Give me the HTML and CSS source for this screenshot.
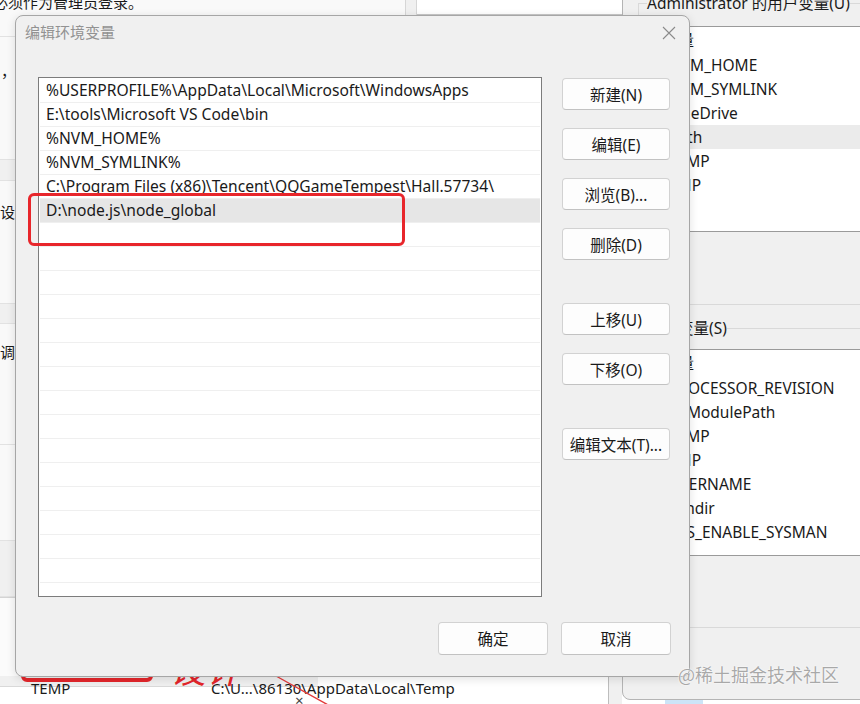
FILE: index.html
```html
<!DOCTYPE html>
<html>
<head>
    <title>编辑环境变量</title>
    <link rel="stylesheet" href="styles.css">
</head>
<body>
    <div class="desktop">
        <!-- window behind, on the left -->
        <div class="back-win">
            <div class="back-top">
                <div class="back-note">必须作为管理员登录。</div>
                <div class="back-gap"></div>
                <div class="back-box"></div>
            </div>
            <div class="band band-a"></div>
            <div class="band band-b"><span class="tail-char comma">，</span></div>
            <div class="band band-grey band-c"></div>
            <div class="band band-d"><span class="tail-char">设</span></div>
            <div class="band band-grey band-e"></div>
            <div class="band band-f"><span class="tail-char">调</span></div>
            <div class="band band-g"></div>
            <div class="band band-grey band-h"></div>
            <div class="band band-white band-i"></div>
            <div class="back-tail">
                <div class="tail-row">
                    <span class="tail-name">TEMP</span>
                    <span class="tail-value">C:\U...\86130\AppData\Local\Temp</span>
                </div>
                <div class="tail-row">
                    <span class="tail-name">TMP</span>
                    <span class="tail-value">C:\U...\86130\AppData\Local\Temp</span>
                </div>
            </div>
        </div>

        <div class="under-strip"><div class="under-cell"></div></div>

        <!-- environment variables window, right -->
        <div class="env-win">
            <fieldset class="group group-user">
                <legend>Administrator 的用户变量(U)</legend>
                <div class="var-list">
                    <div class="var-head">变量</div>
                    <div class="var-row">NVM_HOME</div>
                    <div class="var-row">NVM_SYMLINK</div>
                    <div class="var-row">OneDrive</div>
                    <div class="var-row selected">Path</div>
                    <div class="var-row">TEMP</div>
                    <div class="var-row">TMP</div>
                </div>
            </fieldset>
            <fieldset class="group group-sys">
                <legend>系统变量(S)</legend>
                <div class="var-list">
                    <div class="var-head">变量</div>
                    <div class="var-row">PROCESSOR_REVISION</div>
                    <div class="var-row">PSModulePath</div>
                    <div class="var-row">TEMP</div>
                    <div class="var-row">TMP</div>
                    <div class="var-row">USERNAME</div>
                    <div class="var-row">windir</div>
                    <div class="var-row">ZES_ENABLE_SYSMAN</div>
                </div>
            </fieldset>
        </div>

        <!-- old annotations under the dialog -->
        <div class="mark-box-old"></div>
        <span class="mark-scrawl">设计</span>
        <span class="small-x">×</span>
        <svg class="mark-line" width="860" height="704" viewBox="0 0 860 704">
            <line x1="276" y1="676" x2="330" y2="706" stroke="#e23a3a" stroke-width="1.4"/>
        </svg>

        <!-- the dialog -->
        <div class="dialog">
            <div class="titlebar">
                <span class="title">编辑环境变量</span>
                <svg class="close" width="14" height="14" viewBox="0 0 14 14">
                    <path d="M1 1 L13 13 M13 1 L1 13" stroke="#8a8a8a" stroke-width="1.1" fill="none"/>
                </svg>
            </div>
            <div class="dialog-body">
                <div class="path-list">
                    <div class="path-row">%USERPROFILE%\AppData\Local\Microsoft\WindowsApps</div>
                    <div class="path-row">E:\tools\Microsoft VS Code\bin</div>
                    <div class="path-row">%NVM_HOME%</div>
                    <div class="path-row">%NVM_SYMLINK%</div>
                    <div class="path-row">C:\Program Files (x86)\Tencent\QQGameTempest\Hall.57734\</div>
                    <div class="path-row selected">D:\node.js\node_global</div>
                    <div class="path-row"></div>
                    <div class="path-row"></div>
                    <div class="path-row"></div>
                    <div class="path-row"></div>
                    <div class="path-row"></div>
                    <div class="path-row"></div>
                    <div class="path-row"></div>
                    <div class="path-row"></div>
                    <div class="path-row"></div>
                    <div class="path-row"></div>
                    <div class="path-row"></div>
                    <div class="path-row"></div>
                    <div class="path-row"></div>
                    <div class="path-row"></div>
                    <div class="path-row"></div>
                    <div class="path-row"></div>
                </div>
                <div class="side-buttons">
                    <button class="btn">新建(N)</button>
                    <button class="btn">编辑(E)</button>
                    <button class="btn">浏览(B)...</button>
                    <button class="btn">删除(D)</button>
                    <button class="btn btn-sep">上移(U)</button>
                    <button class="btn">下移(O)</button>
                    <button class="btn btn-sep">编辑文本(T)...</button>
                </div>
            </div>
            <div class="dialog-foot">
                <button class="btn btn-wide">确定</button>
                <button class="btn btn-wide">取消</button>
            </div>
        </div>

        <div class="red-box"></div>
        <div class="watermark">@稀土掘金技术社区</div>
    </div>
</body>
</html>
```

FILE: styles.css
```css
body {
    margin: 0;
    background-color: #ffffff;
    font-family: "Noto Sans", "Noto Sans CJK SC", sans-serif;
    font-size: 15.5px;
    color: #1a1a1a;
}

.desktop {
    position: relative;
    width: 860px;
    height: 704px;
    overflow: hidden;
    background-color: #f0f0f0;
}

/* back window (left) */

.back-win {
    position: absolute;
    left: 0;
    top: 0;
    width: 622px;
    height: 704px;
    background-color: #f9f9f9;
    display: flex;
    flex-direction: column;
}

.back-top {
    height: 15px;
    flex: none;
    display: flex;
}

.back-note {
    width: 405px;
    font-size: 15px;
    line-height: 20px;
    margin-top: -8px;
    text-indent: -7px;
    white-space: nowrap;
}

.back-gap {
    width: 10px;
    background-color: #f0f0f0;
    border-left: 1px solid #d6d6d6;
    border-right: 1px solid #d6d6d6;
}

.back-box {
    flex: 1;
    background-color: #ffffff;
    border-bottom: 1px solid #c8c8c8;
}

.band {
    flex: none;
    box-sizing: border-box;
    font-size: 15px;
    line-height: 20px;
}

.band-a { height: 22px; border-bottom: 1px solid #e2e2e2; }
.band-b { height: 122px; padding-top: 24px; }
.band-c { height: 22px; }
.band-d { height: 122px; padding-top: 21px; }
.band-e { height: 21px; }
.band-f { height: 120px; padding-top: 18px; }
.band-g { height: 96px; border-top: 1px solid #e2e2e2; }
.band-h { height: 57px; }
.band-i { height: 79px; border-top: 1px solid #d4d4d4; }

.band-grey {
    background-color: #f0f0f0;
    border-top: 1px solid #e2e2e2;
    border-bottom: 1px solid #e2e2e2;
}

.band-white {
    background-color: #fbfbfb;
}

.tail-char {
    display: block;
}

.comma {
    margin-left: 1px;
}

.back-tail {
    flex: none;
    height: 40px;
    background: linear-gradient(#f0f0f0 0 10px, #d9d9d9 10px 11px, #ffffff 11px) no-repeat;
    background-size: 318px 100%;
    background-color: #ffffff;
}

.tail-row {
    height: 22px;
    line-height: 22px;
    font-size: 15px;
    display: flex;
    white-space: nowrap;
}

.tail-row:first-child {
    margin-top: 1px;
}

.tail-name {
    width: 180px;
    padding-left: 31px;
}

.under-strip {
    position: absolute;
    left: 608px;
    top: 677px;
    width: 252px;
    height: 27px;
    box-sizing: border-box;
    border-left: 1px solid #bdbdbd;
    background: linear-gradient(to right, #f0f0f0 13px, #ffffff 13px);
}

.under-cell {
    width: 38px;
    height: 4px;
    margin: 23px 0 0 56px;
    background-color: #cce4f7;
}

/* environment variables window (right) */

.env-win {
    position: absolute;
    left: 622px;
    top: -21px;
    width: 250px;
    height: 721px;
    box-sizing: border-box;
    padding: 13px 0 0 15px;
    background-color: #f0f0f0;
    border: 1px solid #b4b4b4;
    border-radius: 8px;
}

.group {
    margin: 0;
    border: 1px solid #d9d9d9;
    border-right: none;
    padding: 13px 0 72px 16px;
    min-width: 0;
}

.group legend {
    padding: 0;
    margin-left: -8px;
    line-height: 20px;
    white-space: nowrap;
}

.group-sys {
    margin-top: 13px;
    padding-top: 11px;
    padding-bottom: 71px;
}

.var-list {
    background-color: #ffffff;
    border: 1px solid #9a9a9a;
    border-right: none;
    height: 206px;
    box-sizing: border-box;
    overflow: hidden;
}

.group-sys .var-list {
    height: 207px;
}

.var-head {
    height: 26px;
    line-height: 26px;
    padding-left: 7px;
}

.var-row {
    height: 24px;
    line-height: 24px;
    padding-left: 13px;
    white-space: nowrap;
}

.var-row.selected {
    background-color: #ebebeb;
}

/* annotations left under the dialog */

.mark-box-old {
    position: absolute;
    left: 21px;
    top: 640px;
    width: 132px;
    height: 42px;
    box-sizing: border-box;
    border: 4px solid #e4262b;
    border-radius: 6px;
}

.mark-scrawl {
    position: absolute;
    left: 170px;
    top: 650px;
    font-size: 36px;
    line-height: 40px;
    color: #e4262b;
    font-style: italic;
}

.small-x {
    position: absolute;
    left: 295px;
    top: 690px;
    font-size: 15px;
    line-height: 20px;
    color: #444444;
}

.mark-line {
    position: absolute;
    left: 0;
    top: 0;
}

/* dialog */

.dialog {
    position: absolute;
    left: 15px;
    top: 15px;
    width: 675px;
    height: 662px;
    box-sizing: border-box;
    background-color: #f0f0f0;
    border: 1px solid #a6a6a6;
    border-radius: 8px;
    box-shadow: 0 2px 10px rgba(0, 0, 0, 0.12);
    display: flex;
    flex-direction: column;
}

.titlebar {
    height: 36px;
    box-sizing: border-box;
    flex: none;
    display: flex;
    align-items: flex-start;
    justify-content: space-between;
    padding: 6px 13px 0 9px;
}

.title {
    color: #929292;
    font-size: 15px;
    line-height: 20px;
}

.close {
    margin-top: 4px;
}

.dialog-body {
    display: flex;
    gap: 20px;
    padding: 25px 19px 0 22px;
}

.path-list {
    width: 504px;
    height: 520px;
    box-sizing: border-box;
    border: 1px solid #7c7c7c;
    background-color: #ffffff;
    padding: 1px 1px 0 1px;
    overflow: hidden;
}

.path-row {
    height: 24px;
    box-sizing: border-box;
    font-size: 15.6px;
    line-height: 23px;
    padding-left: 6px;
    border-bottom: 1px solid #efefef;
    white-space: nowrap;
    overflow: hidden;
}

.path-row.selected {
    background-color: #e6e6e6;
}

.side-buttons {
    display: flex;
    flex-direction: column;
    padding-top: 1px;
}

.btn {
    width: 108px;
    height: 32px;
    box-sizing: border-box;
    padding: 0;
    font-family: "Noto Sans", "Noto Sans CJK SC", sans-serif;
    font-size: 15.5px;
    color: #1a1a1a;
    background-color: #fdfdfd;
    border: 1px solid #d2d2d2;
    border-bottom-color: #c2c2c2;
    border-radius: 4px;
}

.btn + .btn {
    margin-top: 18px;
}

.btn.btn-sep {
    margin-top: 43px;
}

.dialog-foot {
    display: flex;
    justify-content: flex-end;
    gap: 13px;
    padding: 25px 18px 20px 0;
}

.dialog-foot .btn {
    width: 110px;
    height: 33px;
    margin-top: 0;
}

/* overlays */

.red-box {
    position: absolute;
    left: 28px;
    top: 193px;
    width: 377px;
    height: 53px;
    box-sizing: border-box;
    border: 3px solid #e8262b;
    border-radius: 6px;
}

.watermark {
    position: absolute;
    left: 678px;
    top: 661px;
    font-family: "Noto Sans CJK SC", sans-serif;
    font-size: 18px;
    line-height: 26px;
    color: rgba(140, 140, 140, 0.75);
    text-shadow: 0 0 1px #ffffff, 0 0 2px #ffffff;
    white-space: nowrap;
}
```
